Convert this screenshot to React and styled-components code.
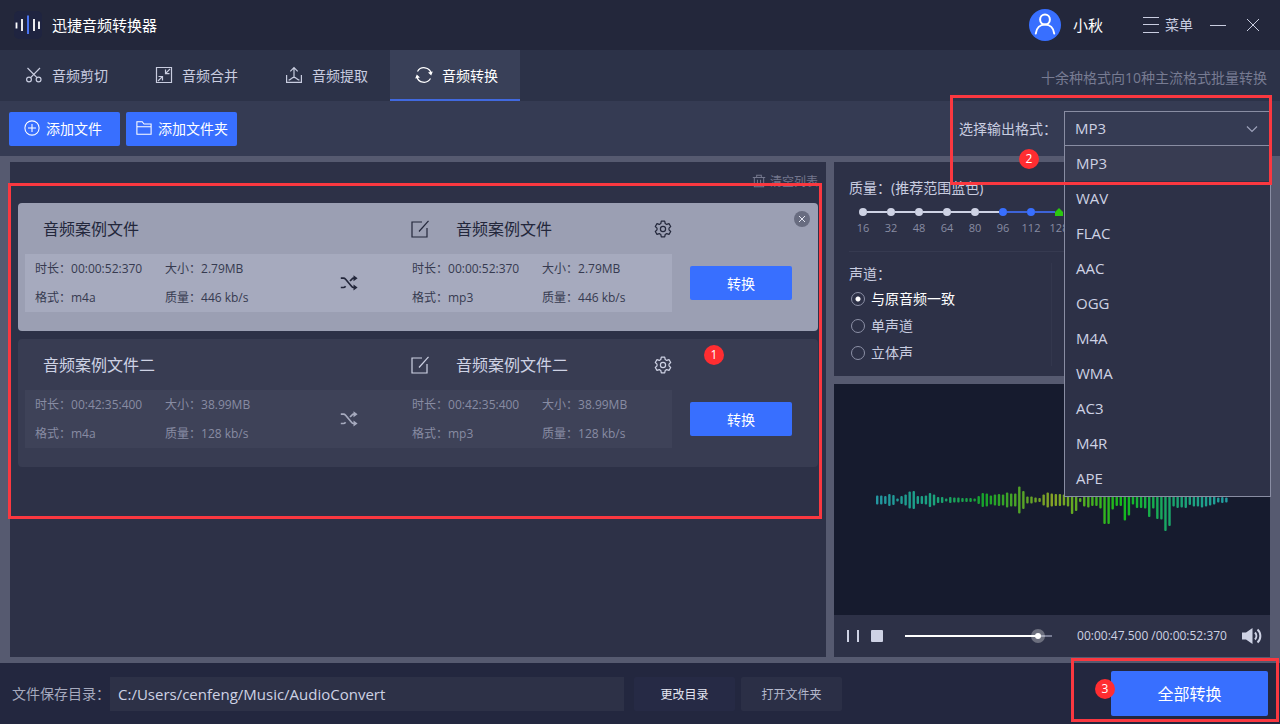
import React, { useState } from 'react'
import styled, { createGlobalStyle, css } from 'styled-components'

const formats = ['MP3', 'WAV', 'FLAC', 'AAC', 'OGG', 'M4A', 'WMA', 'AC3', 'M4R', 'APE']
const rates = [16, 32, 48, 64, 80, 96, 112, 128]
const channels = ['与原音频一致', '单声道', '立体声']

const files = [
  { name: '音频案例文件', time: '00:00:52:370', size: '2.79MB', quality: '446 kb/s', active: true },
  { name: '音频案例文件二', time: '00:42:35:400', size: '38.99MB', quality: '128 kb/s', active: false },
]

const wave = [
  9, 9, 8, 12, 10, 3, 8, 11, 17, 18, 8, 8, 9, 14, 11, 6, 6, 3, 6, 5, 5, 4, 4, 4, 3, 8, 14, 13, 9,
  11, 12, 11, 15, 13, 13, 27, 18, 7, 7, 5, 4, 11, 15, 13, 12, 12, 11, 13, 28, 22, 4, 13, 15, 12,
  12, 17, 48, 48, 19, 12, 12, 41, 31, 9, 16, 16, 17, 34, 17, 38, 39, 62, 52, 13, 16, 15, 16, 10,
  13, 13, 15, 13, 11, 9, 5, 6, 5,
]

const Icon = ({ size = 18, stroke = 1, children }) => (
  <svg width={size} height={size} viewBox="0 0 18 18" fill="none" stroke="currentColor" strokeWidth={stroke} aria-hidden="true">
    {children}
  </svg>
)

const CutIcon = () => (
  <Icon stroke={1.2}>
    <circle cx="4" cy="13.5" r="2.4" />
    <circle cx="13.6" cy="13.5" r="2.4" />
    <path d="M2.5 2 12 11.7M15 2 5.6 11.7" />
  </Icon>
)

const MergeIcon = () => (
  <Icon stroke={1.2}>
    <path d="M1.5 1.5h15v15h-15z" />
    <path d="M15 3 10.7 7.3M10.5 3.6v4h4M3 15l4.3-4.3M3.5 10.5h4v4" />
  </Icon>
)

const ExtractIcon = () => (
  <Icon stroke={1.2}>
    <path d="M1.6 9v7.4h14.8V9" />
    <path d="M9 11.5V1.8M5.3 5.3 9 1.6l3.7 3.7" />
    <path d="M3.5 14c1.5 0 2-.9 3-1.6 1.6-1.2 3.4-1.2 5 0 1 .7 1.500 1.600 3 1.600" />
  </Icon>
)

const ConvertIcon = () => (
  <Icon stroke={1.2}>
    <path d="M2.5 5.500A7.500 7.500 0 0 1 16.300 7.500M15.500 12.500A7.500 7.500 0 0 1 1.700 10.500" />
    <path d="M13 6.500 17.800 5.500 16.200 9.600zM5 11.500.2 12.500 1.800 8.400z" fill="currentColor" stroke="none" />
  </Icon>
)

const EditIcon = () => (
  <Icon stroke={1.2}>
    <path d="M11 2H1v15h15V8" />
    <path d="M17.500.8 8 11.500" />
  </Icon>
)

const GearIcon = () => (
  <Icon stroke={1.2}>
    <path d="M7.300 1.200h3.400l.5 2.300 1.500.9 2.300-.8 1.700 2.900L15 8.100v1.800l1.700 1.600-1.700 2.900-2.300-.8-1.500.9-.5 2.300H7.300l-.5-2.300-1.500-.9-2.300.8-1.700-2.900L3 9.900V8.100L1.300 6.500 3 3.600l2.300.8 1.500-.9z" strokeLinejoin="round" />
    <circle cx="9" cy="9" r="2.600" />
  </Icon>
)

const ShuffleIcon = () => (
  <Icon stroke={1.700}>
    <path d="M.8 4.200h2.600c1 0 1.500.3 2.200 1.100l5.900 7c.7.9 1.200 1.200 2.200 1.200h1" />
    <path d="M.8 13.500h2.600c1 0 1.500-.3 2.200-1.200M10 7l1.700-1.700c.7-.8 1.200-1.100 2.200-1.100h1" />
    <path d="M13.500 1.200 17.600 4.200 13.500 7.200zM13.500 10.500l4.100 3-4.100 3z" fill="currentColor" stroke="none" />
  </Icon>
)

const TrashIcon = () => (
  <Icon size={14} stroke={1.300}>
    <path d="M1 4.500h16M6 4.500V1.500h6v3M3 4.500V16.500h12V4.500M7 7.500v6M11 7.500v6" />
  </Icon>
)

const AddIcon = () => (
  <Icon size={16} stroke={1.200}>
    <circle cx="9" cy="9" r="8" />
    <path d="M9 4.500v9M4.500 9h9" />
  </Icon>
)

const FolderIcon = () => (
  <Icon size={16} stroke={1.200}>
    <path d="M1 2h6l2 2.500h8V16H1zM1 7.500h16" />
  </Icon>
)

const VolumeIcon = () => (
  <svg width="20" height="18" viewBox="0 0 20 18" fill="none" aria-hidden="true">
    <path d="M0 5.500h4L10.500 1v16L4 12.500H0z" fill="currentColor" />
    <path d="M13 5.500c1.800 2 1.800 5 0 7M15.500 2.500c3.800 3.500 3.800 9.500 0 13" stroke="currentColor" strokeWidth="2" />
  </svg>
)

const Logo = () => (
  <svg width="28" height="28" viewBox="0 0 28 28" aria-hidden="true">
    <rect width="28" height="28" rx="5" fill="#1f2440" />
    <path d="M2.500 11.500v6M8 8v12M20 8v12M25 10.500v7.500" stroke="#fff" strokeWidth="1.800" />
    <path d="M14 4.500V23" stroke="#4a74f0" strokeWidth="2" />
  </svg>
)

const Avatar = () => (
  <svg width="32" height="32" viewBox="0 0 32 32" fill="none" stroke="#fff" strokeWidth="2" aria-hidden="true">
    <circle cx="16" cy="16" r="16" fill="#386fff" stroke="none" />
    <circle cx="16" cy="10.500" r="4.900" />
    <path d="M6.800 24.500c.6-5.500 4.300-9 9.200-9s8.600 3.500 9.200 9" strokeLinecap="round" />
  </svg>
)

const Wave = () => (
  <svg width="352" height="130" viewBox="0 0 352 130" aria-hidden="true">
    <defs>
      <linearGradient id="wave" gradientUnits="userSpaceOnUse" x1="0" y1="0" x2="352" y2="0">
        <stop offset="0" stopColor="#2397a3" />
        <stop offset="0.160" stopColor="#1aa37f" />
        <stop offset="0.310" stopColor="#17a428" />
        <stop offset="0.500" stopColor="#87a326" />
        <stop offset="0.700" stopColor="#14bb1c" />
        <stop offset="0.830" stopColor="#19a668" />
        <stop offset="1" stopColor="#229da3" />
      </linearGradient>
    </defs>
    {wave.map((h, i) => (
      <rect key={i} x={i * 4.060} y={65 - h / 2} width="2.400" height={h} rx="1" fill="url(#wave)" />
    ))}
  </svg>
)

function FileCard({ file }) {
  const [title, setTitle] = useState(file.name)
  return (
    <Card $active={file.active}>
      <div>
        <TitleRow>
          <FileName>{title}</FileName>
          <IconButton aria-label="edit" onClick={() => setTitle(file.name)}><EditIcon /></IconButton>
          <FileName>{title}</FileName>
          <IconButton aria-label="settings"><GearIcon /></IconButton>
        </TitleRow>
        <InfoGrid $active={file.active}>
          <Info><span>时长：{file.time}</span><span>格式：m4a</span></Info>
          <Info><span>大小：{file.size}</span><span>质量：{file.quality}</span></Info>
          <ShuffleIcon />
          <Info><span>时长：{file.time}</span><span>格式：mp3</span></Info>
          <Info><span>大小：{file.size}</span><span>质量：{file.quality}</span></Info>
        </InfoGrid>
      </div>
      <ConvertButton>转换</ConvertButton>
      {file.active && (
        <RemoveButton aria-label="remove">
          <svg width="8" height="8" viewBox="0 0 8 8" stroke="#e4e6f2"><path d="M1 1l6 6M7 1 1 7" /></svg>
        </RemoveButton>
      )}
    </Card>
  )
}

export default function App() {
  const [format, setFormat] = useState('MP3')
  const [rate, setRate] = useState(128)
  const [channel, setChannel] = useState(channels[0])
  const [position, setPosition] = useState(92)
  const [folder, setFolder] = useState('C:/Users/cenfeng/Music/AudioConvert')

  return (
    <Window>
      <GlobalStyle />
      <Header>
        <Logo />
        <AppName>迅捷音频转换器</AppName>
        <User><Avatar />小秋</User>
        <MenuButton>
          <svg width="16" height="16" viewBox="0 0 16 16" stroke="currentColor" aria-hidden="true">
            <path d="M0 .5h16M0 7.500h16M0 15.500h16" />
          </svg>
          菜单
        </MenuButton>
        <IconButton aria-label="minimize">
          <svg width="16" height="16" viewBox="0 0 16 16" stroke="currentColor"><path d="M0 8.500h16" /></svg>
        </IconButton>
        <IconButton aria-label="close">
          <svg width="14" height="14" viewBox="0 0 14 14" stroke="currentColor"><path d="M1 1l12 12M13 1 1 13" /></svg>
        </IconButton>
      </Header>

      <TabBar>
        <Tab><CutIcon />音频剪切</Tab>
        <Tab><MergeIcon />音频合并</Tab>
        <Tab><ExtractIcon />音频提取</Tab>
        <Tab $active><ConvertIcon />音频转换</Tab>
        <Tip>十余种格式向10种主流格式批量转换</Tip>
      </TabBar>

      <Toolbar>
        <AddButton $inset={15}><AddIcon />添加文件</AddButton>
        <AddButton $inset={10}><FolderIcon />添加文件夹</AddButton>
        <FormatField>
          <label htmlFor="format">选择输出格式：</label>
          <SelectBox>
            <FormatSelect id="format" value={format} onChange={(e) => setFormat(e.target.value)}>
              {formats.map((f) => <option key={f}>{f}</option>)}
            </FormatSelect>
            <Chevron width="12" height="12" viewBox="0 0 12 12" aria-hidden="true">
              <path d="M1 3.500 6 8.500l5-5" fill="none" stroke="#9da1ba" strokeWidth="1.200" />
            </Chevron>
            <Options role="listbox">
              {formats.map((f) => (
                <Option key={f} role="option" aria-selected={f === format} $active={f === format} onClick={() => setFormat(f)}>
                  {f}
                </Option>
              ))}
            </Options>
          </SelectBox>
          <FormatMark />
          <FormatBadge>2</FormatBadge>
        </FormatField>
      </Toolbar>

      <Main>
        <FileList>
          <ClearRow>
            <ClearButton><TrashIcon />清空列表</ClearButton>
          </ClearRow>
          {files.map((file) => <FileCard key={file.name} file={file} />)}
          <ListMark />
          <ListBadge>1</ListBadge>
        </FileList>

        <Side>
          <Settings>
            <Legend>质量：(推荐范围蓝色)</Legend>
            <Rates>
              {rates.map((r) => (
                <Rate key={r} $tone={r > 80 ? '#386fff' : '#ced2e4'} $line={r > 96 ? '#3d63d8' : '#ced2e4'}>
                  <input type="radio" name="rate" checked={r === rate} onChange={() => setRate(r)} />
                  {r}
                </Rate>
              ))}
            </Rates>
            <Divided>
              <Channels>
                <Legend>声道：</Legend>
                {channels.map((c) => (
                  <Channel key={c} $active={c === channel}>
                    <input type="radio" name="channel" checked={c === channel} onChange={() => setChannel(c)} />
                    {c}
                  </Channel>
                ))}
              </Channels>
            </Divided>
          </Settings>
          <Player>
            <WaveArea><Wave /></WaveArea>
            <Controls>
              <IconButton aria-label="pause">
                <svg width="12" height="12" viewBox="0 0 12 12" fill="currentColor"><path d="M0 0h2v12H0zM10 0h2v12h-2z" /></svg>
              </IconButton>
              <IconButton aria-label="stop">
                <svg width="12" height="12" viewBox="0 0 12 12" fill="currentColor"><rect width="12" height="12" rx="1" /></svg>
              </IconButton>
              <Progress
                type="range"
                aria-label="position"
                value={position}
                onChange={(e) => setPosition(e.target.value)}
                style={{ '--played': `${position}%` }}
              />
              <Time>00:00:47.500 /00:00:52:370</Time>
              <IconButton aria-label="volume"><VolumeIcon /></IconButton>
            </Controls>
          </Player>
        </Side>
      </Main>

      <Footer>
        <label htmlFor="folder">文件保存目录：</label>
        <PathInput id="folder" value={folder} onChange={(e) => setFolder(e.target.value)} />
        <FolderButton $bright>更改目录</FolderButton>
        <FolderButton>打开文件夹</FolderButton>
        <ConvertAll>
          <ConvertAllButton>全部转换</ConvertAllButton>
          <ConvertMark />
          <ConvertBadge>3</ConvertBadge>
        </ConvertAll>
      </Footer>
    </Window>
  )
}

const GlobalStyle = createGlobalStyle`
  * {
    box-sizing: border-box;
  }
  body {
    margin: 0;
    background: #23273b;
  }
  body, button, input, select {
    font-family: "Open Sans", "Noto Sans CJK SC", sans-serif;
    font-size: 14px;
  }
  button {
    border: none;
    padding: 0;
    color: inherit;
    background: none;
    cursor: pointer;
  }
  svg {
    flex: none;
    display: block;
  }
`

const Window = styled.div`
  min-height: 100vh;
  display: flex;
  flex-direction: column;
  color: #c9cde0;
  line-height: 20px;
  overflow: hidden;
`

const Header = styled.header`
  display: flex;
  align-items: center;
  height: 50px;
  padding: 0 20px 0 14px;
  background: #23273b;
`

const AppName = styled.h1`
  flex: 1;
  margin: 0 0 0 10px;
  font-size: 15px;
  font-weight: 400;
  color: #fff;
`

const User = styled.div`
  display: flex;
  align-items: center;
  gap: 12px;
  margin-right: 40px;
  font-size: 15px;
  color: #fff;
`

const MenuButton = styled.button`
  display: flex;
  align-items: center;
  gap: 6px;
  margin-right: 17px;
  line-height: 20px;
`

const IconButton = styled.button`
  display: flex;
  align-items: center;

  ${Header} & + & {
    margin-left: 20px;
  }
`

const TabBar = styled.nav`
  display: flex;
  height: 51px;
  padding-right: 13px;
  background: #2c3248;
`

const Tab = styled.button`
  display: flex;
  align-items: center;
  gap: 9px;
  width: 130px;
  padding-left: 25px;
  border-bottom: 2px solid transparent;

  ${(p) => p.$active && css`
    color: #fff;
    background: #394058;
    border-color: #4169df;
  `}
`

const Tip = styled.span`
  margin-left: auto;
  align-self: center;
  padding-top: 4px;
  color: #777b92;
`

const Toolbar = styled.div`
  display: flex;
  align-items: center;
  gap: 6px;
  height: 55px;
  padding: 0 9px;
  background: #353b53;
`

const AddButton = styled.button`
  display: flex;
  align-items: center;
  gap: 6px;
  width: 111px;
  height: 34px;
  padding: 0 0 2px ${(p) => p.$inset}px;
  border-radius: 2px;
  white-space: nowrap;
  color: #fff;
  background: #386fff;
`

const FormatField = styled.div`
  position: relative;
  z-index: 2;
  display: flex;
  align-items: center;
  gap: 7px;
  margin-left: auto;
`

const SelectBox = styled.div`
  position: relative;
  width: 207px;
`

const FormatSelect = styled.select`
  appearance: none;
  display: block;
  width: 100%;
  height: 35px;
  padding: 0 10px 2px;
  border: 1px solid #898da3;
  border-radius: 0;
  outline: none;
  font-size: 15px;
  color: #ced2e4;
  background: #353b53;
`

const Chevron = styled.svg`
  position: absolute;
  right: 13px;
  top: 12px;
  pointer-events: none;
`

const Options = styled.ul`
  position: absolute;
  top: 34px;
  left: 0;
  right: 0;
  margin: 0;
  padding: 0;
  list-style: none;
  border: 1px solid #898da3;
  background: #2d3147;
`

const Option = styled.li`
  height: 35px;
  padding-left: 11px;
  font-size: 15px;
  line-height: 35px;
  color: #ced2e4;
  background: ${(p) => (p.$active ? '#383c52' : 'transparent')};
`

/* red callouts drawn over the screens */
const Mark = styled.div`
  position: absolute;
  border: 3px solid #fa3840;
  pointer-events: none;
`

const Badge = styled.span`
  position: absolute;
  width: 20px;
  height: 20px;
  border-radius: 50%;
  font-size: 12px;
  line-height: 20px;
  text-align: center;
  color: #fff;
  background: #ff2d31;
`

const FormatMark = styled(Mark)`
  top: -16px;
  right: -1px;
  width: 322px;
  height: 90px;
`

const FormatBadge = styled(Badge)`
  top: 38px;
  right: 232px;
`

const Main = styled.main`
  flex: 1;
  display: flex;
  gap: 8px;
  padding: 6px 10px;
  background: #565a70;
`

const FileList = styled.section`
  position: relative;
  flex: 1;
  padding: 0 8px;
  background: #2d3147;
`

const ListMark = styled(Mark)`
  top: 21px;
  left: -2px;
  right: 4px;
  height: 336px;
`

const ListBadge = styled(Badge)`
  top: 183px;
  right: 102px;
`

const ClearRow = styled.div`
  display: flex;
  justify-content: flex-end;
  height: 41px;
`

const ClearButton = styled.button`
  display: flex;
  align-items: center;
  gap: 4px;
  height: 38px;
  font-size: 12px;
  color: #74778d;
`

const Card = styled.article`
  position: relative;
  display: grid;
  grid-template-columns: 1fr 102px;
  gap: 18px;
  height: 128px;
  margin-bottom: 8px;
  padding: 0 26px 0 7px;
  border-radius: 4px;
  color: ${(p) => (p.$active ? '#23273b' : '#ced2e4')};
  background: ${(p) => (p.$active ? '#9b9fb3' : '#383c52')};
`

const TitleRow = styled.div`
  display: grid;
  grid-template-columns: 368fr 45px 198fr 18px;
  align-items: center;
  height: 51px;
  padding-left: 18px;
`

const FileName = styled.span`
  font-size: 16px;
`

const InfoGrid = styled.div`
  display: grid;
  grid-template-columns: 130fr 175fr 72fr 130fr 130fr;
  align-items: center;
  padding-left: 10px;
  font-size: 12px;
  color: ${(p) => (p.$active ? '#363a50' : '#888ca3')};
  background: ${(p) => (p.$active ? '#a6aabe' : '#3e4258')};

  svg {
    color: ${(p) => (p.$active ? '#23273b' : '#a6aabe')};
  }
`

const Info = styled.div`
  display: grid;
  line-height: 29px;
  white-space: nowrap;
`

const ConvertButton = styled.button`
  height: 34px;
  margin-top: 63px;
  border-radius: 2px;
  color: #fff;
  background: #386fff;
`

const RemoveButton = styled.button`
  position: absolute;
  top: 8px;
  right: 8px;
  display: grid;
  place-items: center;
  width: 16px;
  height: 16px;
  border-radius: 50%;
  background: #686c80;
`

const Side = styled.aside`
  display: flex;
  flex-direction: column;
  gap: 8px;
  width: 436px;
`

const Settings = styled.section`
  height: 214px;
  padding: 15px 15px 0;
  background: #2d3147;
`

const Legend = styled.div`
  line-height: 22px;
`

const Rates = styled.div`
  display: flex;
  height: 52px;
  padding-top: 9px;
`

const Rate = styled.label`
  position: relative;
  display: flex;
  flex-direction: column;
  align-items: center;
  width: 28px;
  font-size: 11px;
  line-height: 24px;
  color: #888ca3;

  &:not(:first-child)::before {
    content: '';
    position: absolute;
    top: 3px;
    left: -10px;
    width: 20px;
    height: 2px;
    background: ${(p) => p.$line};
  }

  input {
    appearance: none;
    width: 8px;
    height: 8px;
    margin: 0;
    border-radius: 50%;
    background: ${(p) => p.$tone};
  }

  input:checked {
    border-radius: 0;
    background: #2bc80f;
    clip-path: polygon(50% 0, 100% 50%, 100% 100%, 0 100%, 0 50%);
  }
`

const Divided = styled.div`
  padding-top: 11px;
  border-top: 1px solid #363a50;
`

const Channels = styled.div`
  display: flex;
  flex-direction: column;
  width: 50%;
  border-right: 1px solid #33374d;
`

const Channel = styled.label`
  display: flex;
  align-items: center;
  gap: 6px;
  height: 27px;
  padding-left: 2px;
  color: ${(p) => (p.$active ? '#fff' : '#c9cde0')};

  input {
    appearance: none;
    width: 14px;
    height: 14px;
    margin: 0;
    border: 1px solid #8c90a6;
    border-radius: 50%;
  }

  input:checked {
    background: radial-gradient(circle, #fff 2px, transparent 3px);
  }
`

const Player = styled.section`
  flex: 1;
  display: flex;
  flex-direction: column;
`

const WaveArea = styled.div`
  flex: 1;
  display: grid;
  place-items: center;
  background: #161b2e;
`

const Controls = styled.div`
  display: flex;
  align-items: center;
  gap: 12px;
  height: 42px;
  padding: 0 8px 0 13px;
  color: #ced2e4;
  background: #2d3147;
`

const Progress = styled.input`
  appearance: none;
  flex: 1;
  min-width: 0;
  height: 14px;
  margin: 0 10px;
  background: none;

  &::-webkit-slider-runnable-track {
    height: 2px;
    background: linear-gradient(to right, #fff var(--played), #777b92 var(--played));
  }

  &::-webkit-slider-thumb {
    appearance: none;
    width: 6px;
    height: 6px;
    margin-top: -2px;
    border-radius: 50%;
    background: #fff;
    box-shadow: 0 0 0 4px rgba(255, 255, 255, 0.3);
  }
`

const Time = styled.span`
  min-width: 156px;
  font-size: 12px;
  text-align: center;
`

const Footer = styled.footer`
  display: flex;
  align-items: center;
  height: 61px;
  padding: 0 12px;
  color: #a6aabe;
  background: #23273f;
`

const PathInput = styled.input`
  flex: 0 1 514px;
  min-width: 0;
  height: 34px;
  padding: 0 8px;
  border: none;
  outline: none;
  font-size: 15px;
  color: #ced2e4;
  background: #2d3147;
`

const FolderButton = styled.button`
  width: 101px;
  height: 34px;
  margin-left: 6px;
  border-radius: 2px;
  font-size: 12px;
  color: ${(p) => (p.$bright ? '#e4e6f2' : '#b4b8cc')};
  background: ${(p) => (p.$bright ? '#262a45' : '#2b2f46')};

  ${PathInput} + & {
    margin-left: 10px;
  }
`

const ConvertAll = styled.div`
  position: relative;
  margin-left: auto;
`

const ConvertAllButton = styled.button`
  display: block;
  width: 157px;
  height: 45px;
  padding-bottom: 2px;
  border-radius: 2px;
  font-size: 16px;
  color: #fff;
  background: #386fff;
`

const ConvertMark = styled(Mark)`
  top: -13px;
  right: -11px;
  width: 208px;
  height: 64px;
`

const ConvertBadge = styled(Badge)`
  top: 8px;
  left: -16px;
`
